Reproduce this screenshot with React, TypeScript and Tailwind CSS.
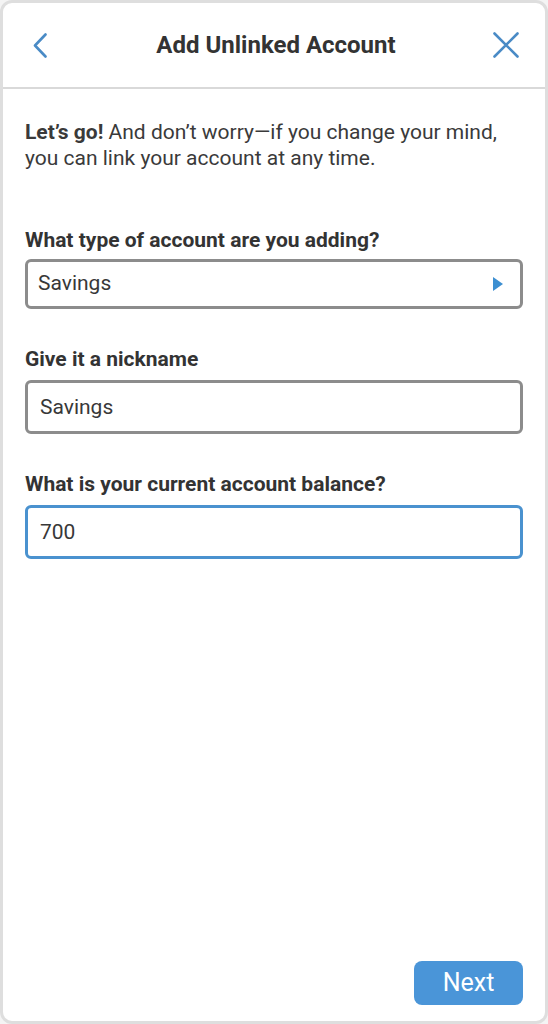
import { useState } from 'react';

export default function App() {
  const [nickname, setNickname] = useState('Savings');
  const [balance, setBalance] = useState('700');

  return (
    <div className="h-screen w-full bg-[#f4f4f4] font-['Roboto',sans-serif] text-[#363636]">
      <div className="flex h-full flex-col overflow-hidden rounded-[12px] border-[3px] border-[#dedede] bg-white">
        {/* Header */}
        <div className="flex h-[86px] shrink-0 items-center justify-between border-b-2 border-[#d9d9d9] pl-[30px] pr-[26px]">
          <button className="flex h-[30px] w-[30px] items-center justify-start">
            <svg width="14" height="25" viewBox="0 0 14 25" fill="none">
              <path d="M12.5 1.5 L2 12.5 L12.5 23.5" stroke="#4a8bc6" strokeWidth="2.6" strokeLinecap="round" strokeLinejoin="round" />
            </svg>
          </button>
          <h1 className="text-[24px] font-bold text-[#333]">Add Unlinked Account</h1>
          <button className="flex h-[30px] w-[30px] items-center justify-end">
            <svg width="26" height="26" viewBox="0 0 26 26" fill="none">
              <path d="M1.5 1.5 L24.5 24.5 M24.5 1.5 L1.5 24.5" stroke="#4a8bc6" strokeWidth="2.6" strokeLinecap="round" />
            </svg>
          </button>
        </div>

        {/* Body */}
        <div className="flex flex-1 flex-col px-[22px] pt-[30px] pb-[16px]">
          <p className="text-[21px] leading-[26px] text-[#3a3a3a]">
            <span className="font-bold">Let’s go!</span> And don’t worry—if you change your mind, you can link your account at any time.
          </p>

          <label className="mt-[56px] block text-[21px] font-bold leading-[26px] text-[#333]">
            What type of account are you adding?
          </label>
          <button className="mt-[6px] flex h-[50px] w-full items-center justify-between rounded-[6px] border-[3px] border-[#8c8c8c] pl-[10px] pr-[17px] text-left">
            <span className="text-[21px] text-[#383838]">Savings</span>
            <svg width="10" height="14" viewBox="0 0 10 14">
              <path d="M0 0 L10 7 L0 14 Z" fill="#3d8fd1" />
            </svg>
          </button>

          <label className="mt-[37px] block text-[21px] font-bold leading-[26px] text-[#333]">
            Give it a nickname
          </label>
          <input
            value={nickname}
            onChange={(e) => setNickname(e.target.value)}
            className="mt-[8px] h-[54px] w-full rounded-[6px] border-[3px] border-[#8c8c8c] pl-[12px] text-[21px] text-[#383838] outline-none"
          />

          <label className="mt-[37px] block text-[21px] font-bold leading-[26px] text-[#333]">
            What is your current account balance?
          </label>
          <input
            value={balance}
            onChange={(e) => setBalance(e.target.value)}
            className="mt-[8px] h-[54px] w-full rounded-[6px] border-[3px] border-[#4a92cf] pl-[12px] text-[21px] text-[#383838] outline-none"
          />

          <div className="flex-1" />

          <div className="flex justify-end">
            <button className="h-[44px] w-[109px] rounded-[8px] bg-[#4a95d8] text-[25px] text-white">Next</button>
          </div>
        </div>
      </div>
    </div>
  );
}
